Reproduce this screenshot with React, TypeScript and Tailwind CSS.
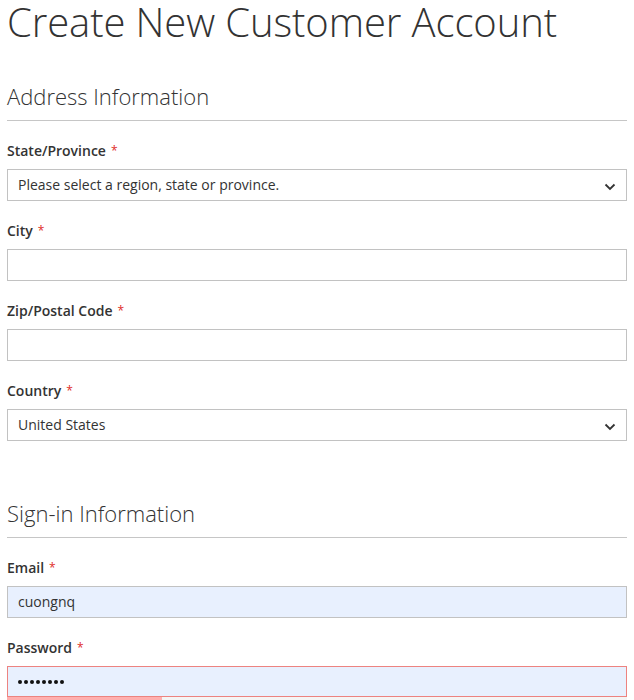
import React from "react";

const font = { fontFamily: '"Open Sans", "Liberation Sans", sans-serif' };

function Label({ text }: { text: string }) {
  return (
    <div className="h-[20px] leading-[20px] text-[14px] font-semibold text-[#333333] mb-[8px]">
      {text}
      <span className="text-[#e02b27] font-normal text-[12px] ml-[5px] align-top">*</span>
    </div>
  );
}

function Chevron() {
  return (
    <svg width="12" height="8" viewBox="0 0 12 8" className="absolute right-[10px] top-[13px]">
      <path d="M1.5 1.5 L6 6 L10.5 1.5" fill="none" stroke="#333333" strokeWidth="1.8" />
    </svg>
  );
}

function SelectBox({ text }: { text: string }) {
  return (
    <div className="relative h-[32px] border border-[#c2c2c2] bg-white pl-[10px] text-[14px] leading-[30px] text-[#333333]">
      {text}
      <Chevron />
    </div>
  );
}

function TextBox({ value, className = "" }: { value?: string; className?: string }) {
  return (
    <div className={`h-[32px] border border-[#c2c2c2] pl-[10px] text-[14px] leading-[30px] text-[#333333] ${className}`}>
      {value}
    </div>
  );
}

function Legend({ text }: { text: string }) {
  return (
    <div className="border-b border-[#c6c6c6] pt-[1px] pb-[11px] text-[22px] leading-[26px] font-light text-[#333333]">
      {text}
    </div>
  );
}

export default function App() {
  return (
    <div style={font} className="w-[634px] h-[700px] overflow-hidden bg-white pl-[7px] pr-[7px]">
      <h1 className="text-[40px] leading-[44px] font-light text-[#333333] m-0 whitespace-nowrap tracking-[-0.1px]">
        Create New Customer Account
      </h1>
      <div className="mt-[38px]">
        <Legend text="Address Information" />
        <div className="mt-[20px]">
          <Label text="State/Province" />
          <SelectBox text="Please select a region, state or province." />
        </div>
        <div className="mt-[20px]">
          <Label text="City" />
          <TextBox />
        </div>
        <div className="mt-[20px]">
          <Label text="Zip/Postal Code" />
          <TextBox />
        </div>
        <div className="mt-[20px]">
          <Label text="Country" />
          <SelectBox text="United States" />
        </div>
      </div>
      <div className="mt-[58px]">
        <Legend text="Sign-in Information" />
        <div className="mt-[20px]">
          <Label text="Email" />
          <TextBox value="cuongnq" className="bg-[#e8f0fe]" />
        </div>
        <div className="mt-[20px]">
          <Label text="Password" />
          <div className="h-[31px] border border-[#ed8380] bg-[#e8f0fe] pl-[10px] flex items-center gap-[2px]">
            {Array.from({ length: 8 }).map((_, i) => (
              <span key={i} className="block w-[4px] h-[4px] rounded-full bg-[#111111]" />
            ))}
          </div>
          <div className="flex h-[5px] bg-[#f4f4f4]">
            <div className="w-[155px] bg-[#ffafae]" />
          </div>
        </div>
      </div>
    </div>
  );
}
